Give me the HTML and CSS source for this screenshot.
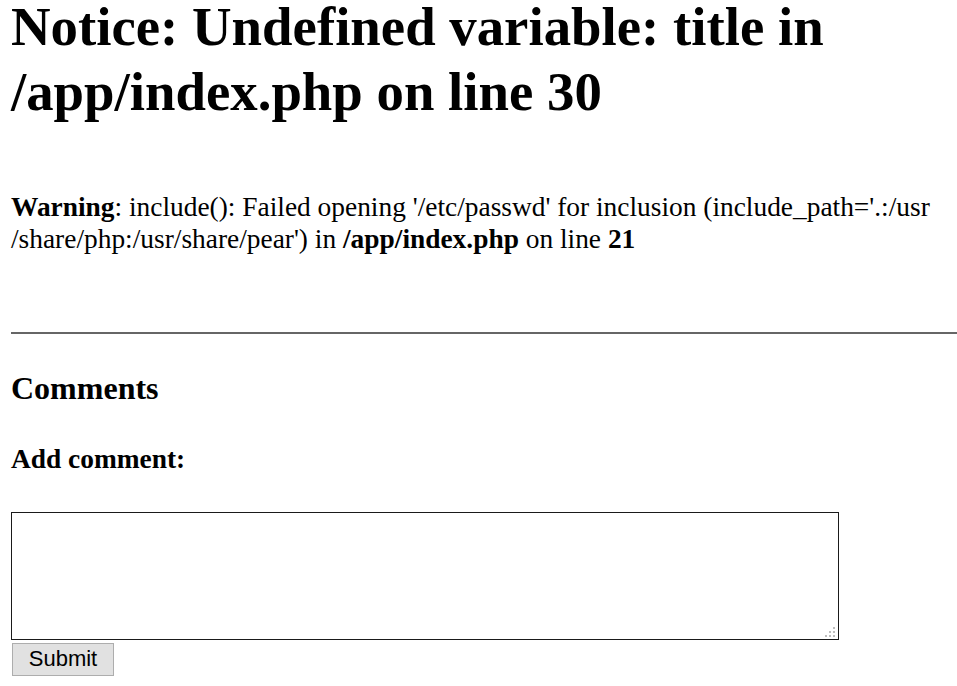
FILE: index.html
```html
<!DOCTYPE html>
<html>
<head>
<meta charset="utf-8">
<title>index</title>
<link rel="stylesheet" href="styles.css">
</head>
<body>
<h1 class="notice">Notice: Undefined variable: title in /app/index.php on line 30</h1>
<p class="warning"><b>Warning</b>: include(): Failed opening '/etc/passwd' for inclusion (include_path='.:/usr<wbr>/share/php:/usr/share/pear') in <b>/app/index.php</b> on line <b>21</b></p>
<hr class="rule">
<h3 class="comments-title">Comments</h3>
<h4 class="add-title">Add comment:</h4>
<form class="comment-form">
  <div class="textarea-wrap">
    <textarea class="comment-box" name="comment"></textarea>
    <svg class="grip" width="10" height="10" viewBox="0 0 10 10" aria-hidden="true">
      <rect x="8" y="0" width="2" height="2" fill="#bdbdbd"/>
      <rect x="4" y="4" width="2" height="2" fill="#bdbdbd"/>
      <rect x="8" y="4" width="2" height="2" fill="#bdbdbd"/>
      <rect x="0" y="8" width="2" height="2" fill="#bdbdbd"/>
      <rect x="4" y="8" width="2" height="2" fill="#bdbdbd"/>
      <rect x="8" y="8" width="2" height="2" fill="#bdbdbd"/>
    </svg>
  </div>
  <button class="submit" type="button">Submit</button>
</form>
</body>
</html>
```
FILE: styles.css
```css
html, body {
  background: #fff;
}
body {
  margin: 0;
  padding: 0 0 0 11px;
  font-family: "Liberation Serif", "Times New Roman", serif;
  color: #000;
  font-size: 27.4px;
}
.notice {
  font-size: 54.8px;
  line-height: 65px;
  font-weight: bold;
  margin: -6px 0 0 0;
}
.warning {
  margin: 68px 0 0 0;
  line-height: 31.5px;
}
.rule {
  margin: 77px 0 0 0;
  height: 0;
  border: 0;
  border-top: 2px solid #666;
}
.comments-title {
  font-size: 32px;
  line-height: 36px;
  margin: 36px 0 0 0;
}
.add-title {
  font-size: 27.4px;
  line-height: 31px;
  margin: 38px 0 0 0;
}
.comment-form {
  margin: 36.6px 0 0 0;
}
.textarea-wrap {
  position: relative;
  width: 828px;
  height: 128px;
}
.comment-box {
  display: block;
  box-sizing: border-box;
  width: 828px;
  height: 128px;
  margin: 0;
  border: 1.5px solid #1a1a1a;
  resize: none;
  background: #fff;
}
.grip {
  position: absolute;
  right: 4px;
  bottom: 3px;
}
.submit {
  display: block;
  box-sizing: border-box;
  margin: 3px 0 0 1px;
  width: 102px;
  height: 33px;
  padding: 0;
  font-family: "Liberation Sans", Tahoma, sans-serif;
  font-size: 22px;
  color: #000;
  background: #e1e1e1;
  border: 1.5px solid #adadad;
  border-radius: 0;
}
```
